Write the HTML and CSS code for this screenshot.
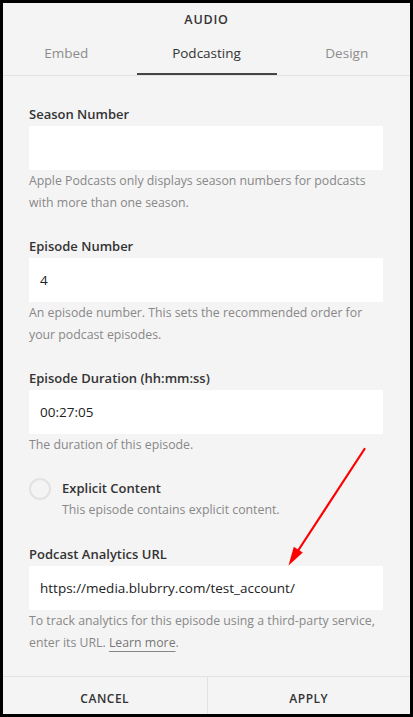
FILE: index.html
```html
<!DOCTYPE html>
<html lang="en">
<head>
<meta charset="utf-8">
<title>Audio – Podcasting</title>
<link rel="stylesheet" href="styles.css">
</head>
<body>
<div class="frame">
  <header class="header">
    <div class="title">AUDIO</div>
    <nav class="tabs">
      <div class="tab tab-left">Embed</div>
      <div class="tab active">Podcasting</div>
      <div class="tab tab-right">Design</div>
    </nav>
  </header>

  <main class="content">
    <div class="field">
      <div class="label">Season Number</div>
      <div class="input"></div>
      <div class="help">Apple Podcasts only displays season numbers for podcasts with more than one season.</div>
    </div>

    <div class="field">
      <div class="label">Episode Number</div>
      <div class="input">4</div>
      <div class="help">An episode number. This sets the recommended order for your podcast episodes.</div>
    </div>

    <div class="field">
      <div class="label">Episode Duration (hh:mm:ss)</div>
      <div class="input">00:27:05</div>
      <div class="help">The duration of this episode.</div>
    </div>

    <div class="check-field">
      <div class="radio"></div>
      <div class="check-text">
        <div class="label">Explicit Content</div>
        <div class="help">This episode contains explicit content.</div>
      </div>
    </div>

    <div class="field">
      <div class="label">Podcast Analytics URL</div>
      <div class="input">https://media.blubrry.com/test_account/</div>
      <div class="help">To track analytics for this episode using a third-party service, enter its URL. <a class="link">Learn more</a>.</div>
    </div>
  </main>

  <footer class="footer">
    <div class="btn">CANCEL</div>
    <div class="btn">APPLY</div>
  </footer>

  <svg class="annotation" width="413" height="717" viewBox="0 0 413 717">
    <line x1="364.5" y1="449" x2="297.5" y2="551.5" stroke="#ff0000" stroke-width="2.2" stroke-linecap="round"/>
    <polygon points="288.5,565.5 293.8,546.8 302.8,552.6" fill="#ff0000"/>
  </svg>
</div>
</body>
</html>
```

FILE: styles.css
```css
* {
  box-sizing: border-box;
}

html, body {
  margin: 0;
  padding: 0;
}

body {
  font-family: "Open Sans", "Liberation Sans", sans-serif;
  color: #333;
}

.frame {
  position: relative;
  width: 413px;
  height: 717px;
  border: 3px solid #000;
  background: #f4f4f4;
  display: flex;
  flex-direction: column;
  overflow: hidden;
}

.header {
  flex: none;
  border-bottom: 1px solid #e2e2e2;
}

.title {
  height: 34px;
  line-height: 34px;
  text-align: center;
  font-size: 12.5px;
  font-weight: 600;
  letter-spacing: 0.8px;
  color: #333;
}

.tabs {
  display: grid;
  grid-template-columns: 1fr 140px 1fr;
  height: 38px;
}

.tab {
  text-align: center;
  line-height: 32px;
  font-size: 13.5px;
  color: #8c8c8c;
}

.tab-left {
  padding-right: 7px;
}

.tab-right {
  padding-left: 7px;
}

.tab.active {
  color: #333;
  border-bottom: 2px solid #444;
}

.content {
  flex: 1;
  overflow: hidden;
  padding: 28px 27px 0 26px;
}

.field {
  margin-bottom: 22px;
}

.label {
  font-size: 13px;
  font-weight: 600;
  line-height: 20px;
  color: #333;
  margin-bottom: 2px;
}

.input {
  height: 44px;
  background: #fff;
  padding-left: 11px;
  line-height: 44px;
  font-size: 13.5px;
  color: #222;
}

.help {
  font-size: 12.3px;
  line-height: 22px;
  color: #888;
}

.link {
  color: #777;
  text-decoration: underline;
  text-decoration-color: #888;
  text-underline-offset: 4px;
}

.check-field {
  display: flex;
  gap: 11px;
  margin-bottom: 23px;
}

.check-field .label {
  margin-bottom: 1px;
}

.radio {
  flex: none;
  width: 22px;
  height: 22px;
  border: 2px solid #e2e2e2;
  border-radius: 50%;
}

.footer {
  flex: none;
  display: grid;
  grid-template-columns: 1fr 1fr;
  border-top: 1px solid #e2e2e2;
  height: 38px;
}

.btn {
  text-align: center;
  padding-top: 8px;
  line-height: 28px;
  font-size: 12px;
  font-weight: 600;
  letter-spacing: 0.5px;
  color: #333;
}

.btn + .btn {
  border-left: 1px solid #e2e2e2;
}

.annotation {
  position: absolute;
  left: -3px;
  top: -3px;
  pointer-events: none;
}
```
